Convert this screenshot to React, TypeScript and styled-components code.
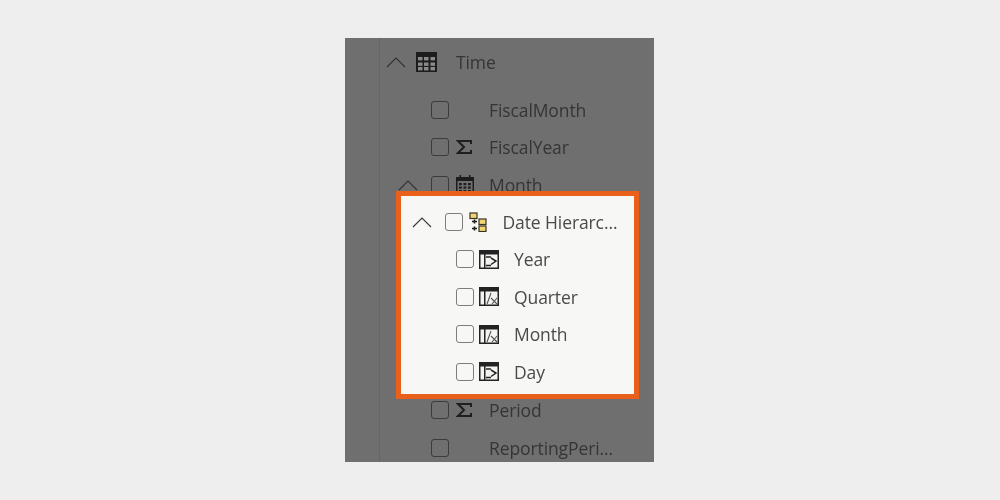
import React from "react";
import styled, { createGlobalStyle } from "styled-components";

const Global = createGlobalStyle`
  html, body { margin: 0; padding: 0; background: #eeeeee; }
  body { font-family: "Open Sans", "Noto Sans", sans-serif; }
`;

const Page = styled.div`
  width: 1000px;
  height: 500px;
  background: #eeeeee;
  display: flex;
  justify-content: center;
  padding: 38px 0 0 -1px;
  box-sizing: border-box;
  overflow: hidden;
`;

const Panel = styled.div`
  width: 309px;
  height: 424px;
  margin-top: 38px;
  margin-left: -1px;
  box-sizing: border-box;
  padding-top: 5px;
  background-color: #6f6f6f;
  background-image: linear-gradient(#666666, #666666);
  background-size: 1px 100%;
  background-position: 34px 0;
  background-repeat: no-repeat;
  display: flex;
  flex-direction: column;
  overflow: hidden;
`;

const Row = styled.div<{ $indent: number; $after?: number }>`
  height: 37.5px;
  flex: none;
  display: flex;
  align-items: center;
  padding-left: ${(p) => p.$indent}px;
  margin-bottom: ${(p) => p.$after ?? 0}px;
  box-sizing: border-box;
`;

const ChevronSlot = styled.div<{ $width: number; $light?: boolean }>`
  width: ${(p) => p.$width}px;
  flex: none;
  display: flex;
  align-items: center;
  color: ${(p) => (p.$light ? "#3c3c3c" : "#333333")};
`;

const Check = styled.span<{ $light?: boolean }>`
  width: 18px;
  height: 18px;
  flex: none;
  box-sizing: border-box;
  border-radius: 3px;
  border: 1.5px solid ${(p) => (p.$light ? "#7d7d7d" : "#3b3b3b")};
`;

const IconSlot = styled.div<{ $pad?: number; $width?: number }>`
  width: ${(p) => p.$width ?? 40}px;
  padding-left: ${(p) => p.$pad ?? 7}px;
  box-sizing: border-box;
  flex: none;
  display: flex;
  align-items: center;
`;

const Label = styled.span<{ $light?: boolean }>`
  font-size: 17.5px;
  line-height: 22px;
  letter-spacing: -0.1px;
  white-space: nowrap;
  color: ${(p) => (p.$light ? "#4a4a4a" : "#353535")};
  filter: blur(0.3px);
`;

const Highlight = styled.div`
  position: relative;
  z-index: 1;
  flex: none;
  width: 243px;
  height: 208px;
  margin: -13px 0 -7px 51px;
  box-sizing: border-box;
  border: 5.5px solid #e9601c;
  background: #f7f7f5;
  padding-top: 7.5px;
  display: flex;
  flex-direction: column;
`;

const Chevron = () => (
  <svg width="20" height="12" viewBox="0 0 20 12" fill="none" stroke="currentColor" strokeWidth="1.2">
    <path d="M1 11 L10 2 L19 11" />
  </svg>
);

const TableIcon = () => (
  <svg width="21" height="20" viewBox="0 0 21 20">
    <rect x="0" y="0" width="21" height="20" fill="#1d1d1d" />
    <g fill="#8a8a8a">
      {[5, 10.5, 15].map((y) =>
        [2, 8, 14.5].map((x) => <rect key={`${x}-${y}`} x={x} y={y} width="4.5" height="3.4" />)
      )}
    </g>
  </svg>
);

const SigmaIcon = () => (
  <svg width="16" height="14" viewBox="0 0 16 14" fill="none" stroke="#1f1f1f">
    <path d="M15 4 V1 H2 L8 7 L2 13 H15 V10" strokeWidth="2" />
  </svg>
);

const CalendarIcon = () => (
  <svg width="18" height="20" viewBox="0 0 18 20">
    <rect x="0.75" y="2.75" width="16.5" height="16.5" fill="none" stroke="#1d1d1d" strokeWidth="1.5" />
    <rect x="0" y="2" width="18" height="4" fill="#1d1d1d" />
    <rect x="3.5" y="0" width="1.6" height="3" fill="#1d1d1d" />
    <rect x="12.9" y="0" width="1.6" height="3" fill="#1d1d1d" />
    <g fill="#1d1d1d">
      {[8, 11.5, 15].map((y) =>
        [3, 7.5, 12].map((x) => <rect key={`${x}-${y}`} x={x} y={y} width="2.8" height="2.2" />)
      )}
    </g>
  </svg>
);

const HierarchyIcon = () => (
  <svg width="18" height="20" viewBox="0 0 18 20">
    <rect x="1" y="1" width="7" height="5.5" fill="#f2d477" stroke="#3a3320" strokeWidth="1.2" />
    <rect x="10" y="7" width="7" height="5.5" fill="#f2d477" stroke="#3a3320" strokeWidth="1.2" />
    <rect x="10" y="14" width="7" height="5.5" fill="#f2d477" stroke="#3a3320" strokeWidth="1.2" />
    <path d="M3 9.5 H8 M5.5 7.5 V11.5 M3 16.5 H8 M5.5 14.5 V18.5" stroke="#1d1d1d" strokeWidth="1.6" fill="none" />
  </svg>
);

const DateFieldIcon = ({ kind }: { kind: "day" | "fx" }) => (
  <svg width="20" height="19" viewBox="0 0 20 19">
    <rect x="0" y="0" width="20" height="19" fill="#232323" />
    <rect x="1.5" y="4.5" width="3.5" height="13" fill="#f4f4f2" />
    <rect x="6.5" y="4.5" width="12" height="13" fill="#f4f4f2" />
    {kind === "day" ? (
      <g fill="none" stroke="#232323" strokeWidth="1.5">
        <path d="M7 7 H12 M7 15.5 H12" />
        <path d="M12 8 L17 11 L12 14.5" />
      </g>
    ) : (
      <g fill="none" stroke="#555" strokeWidth="1.1">
        <path d="M8 17 L12 6" />
        <path d="M12 11 L18 17 M18 11 L13 17" />
      </g>
    )}
  </svg>
);

const dimTop = [
  { name: "FiscalMonth" },
  { name: "FiscalYear", icon: <SigmaIcon /> },
];

const children: { name: string; kind: "day" | "fx" }[] = [
  { name: "Year", kind: "day" },
  { name: "Quarter", kind: "fx" },
  { name: "Month", kind: "fx" },
  { name: "Day", kind: "day" },
];

export default function App() {
  return (
    <Page>
      <Global />
      <Panel>
        <Row $indent={41} $after={10.5}>
          <ChevronSlot $width={30}><Chevron /></ChevronSlot>
          <IconSlot $pad={0}><TableIcon /></IconSlot>
          <Label>Time</Label>
        </Row>
        {dimTop.map((r) => (
          <Row key={r.name} $indent={86}>
            <Check />
            <IconSlot>{r.icon}</IconSlot>
            <Label>{r.name}</Label>
          </Row>
        ))}
        <Row $indent={53}>
          <ChevronSlot $width={33}><Chevron /></ChevronSlot>
          <Check />
          <IconSlot><CalendarIcon /></IconSlot>
          <Label>Month</Label>
        </Row>
        <Highlight>
          <Row $indent={11}>
            <ChevronSlot $width={32.5} $light><Chevron /></ChevronSlot>
            <Check $light />
            <IconSlot $pad={6}><HierarchyIcon /></IconSlot>
            <Label $light>Date Hierarc...</Label>
          </Row>
          {children.map((c) => (
            <Row key={c.name} $indent={55}>
              <Check $light />
              <IconSlot $pad={5}><DateFieldIcon kind={c.kind} /></IconSlot>
              <Label $light>{c.name}</Label>
            </Row>
          ))}
        </Highlight>
        <Row $indent={86}>
          <Check />
          <IconSlot><SigmaIcon /></IconSlot>
          <Label>Period</Label>
        </Row>
        <Row $indent={86}>
          <Check />
          <IconSlot />
          <Label>ReportingPeri...</Label>
        </Row>
      </Panel>
    </Page>
  );
}
